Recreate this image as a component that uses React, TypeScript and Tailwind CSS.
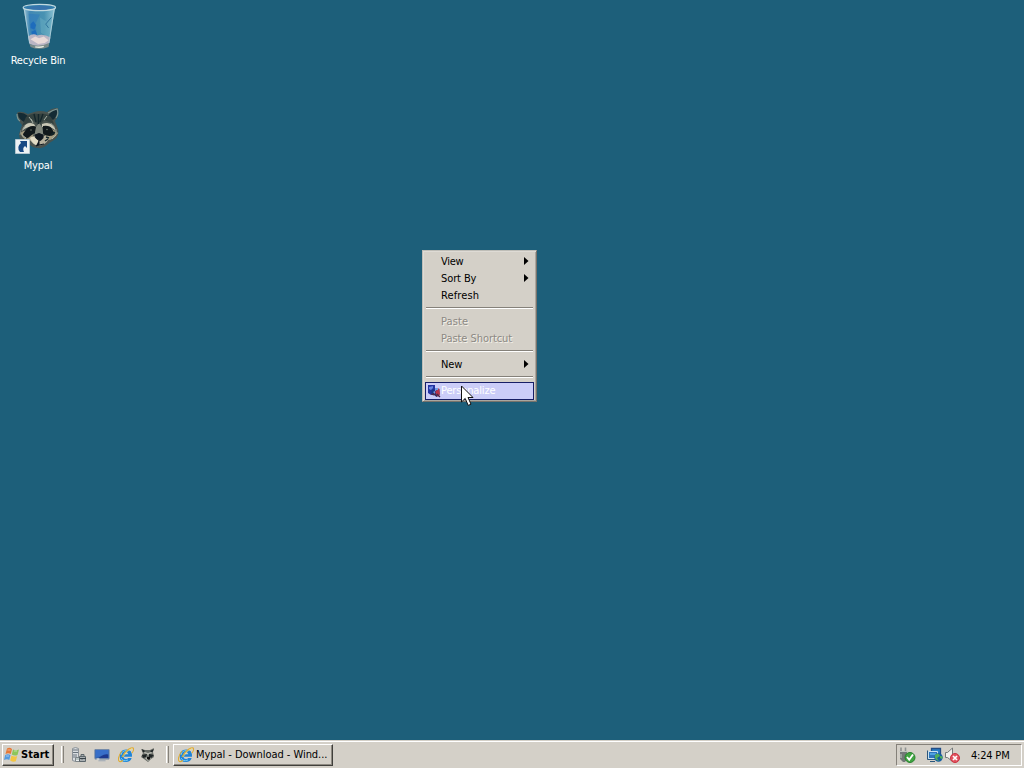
import React from "react";

function RecycleBin() {
  return (
    <svg className="ml-[3px]" width="38" height="46" viewBox="0 0 40 48">
      <defs>
        <linearGradient id="glass" x1="0" x2="1" y1="0" y2="0">
          <stop offset="0" stopColor="#9fc6d8" />
          <stop offset=".2" stopColor="#4389b4" />
          <stop offset=".65" stopColor="#4892b2" />
          <stop offset="1" stopColor="#8fc4d4" />
        </linearGradient>
      </defs>
      <path d="M2.500 4.500 L36 4.500 L29.500 43 Q19 49 9 43 Z" fill="url(#glass)" />
      <path d="M8 11 L11 38 L17 34 L15 22 L20 12 Z" fill="#2a78bd" opacity=".5" />
      <path d="M20 15 L28 20 L33 12 L29 36 L21 31 Z" fill="#66aabf" opacity=".6" />
      <path d="M10 22l3-3 3 4-2 5-4-2zM11 30l4-2 2 5-5 2z" fill="#1765bd" opacity=".75" />
      <path d="M32 15l-6 7 3 4" fill="none" stroke="#2d729b" />
      <path d="M7.500 35 Q13 31 17 34 Q24 32 31 36 L29 44 Q19 47 9 43Z" fill="#b9b5c4" />
      <path d="M10 38l5-3 4 2 5-2 5 4-4 3-7 1z" fill="#e8dad8" />
      <path d="M9 43 Q19 47 29.500 42 L29 46 Q19 50 10 46Z" fill="#7a8a88" />
      <path d="M15 46 Q20 47 24 45.500" stroke="#e7ebdf" strokeWidth="1.400" fill="none" />
      <ellipse cx="19.300" cy="4.500" rx="17" ry="3.300" fill="#327dac" stroke="#c0d9df" strokeWidth="1.300" />
      <path d="M3.500 6 L9 42M35 6 L29.500 42" stroke="#b9d5dd" opacity=".8" />
      <path d="M6 5 Q18 1 31 4 L27 7 Q15 8 6 5" fill="#3d6daf" opacity=".55" />
    </svg>
  );
}

function Raccoon() {
  return (
    <svg width="44" height="44" viewBox="0 0 44 44">
      <path d="M1 6 Q4 3 12 7 L18 5 Q25 3 31 5 Q35 1 42 1 Q44 8 39 14 L42 22 Q44 29 38 33 Q33 36 31 38 Q27 42 22 41 Q16 41 12 36 Q3 35 3 27 L6 18 Q1 13 1 6Z" fill="#49534f" />
      <path d="M2 6 Q7 5 12 9 L8 15 Q2 12 2 6M41 2 Q35 4 32 9 L37 13 Q42 9 41 2" fill="#142b34" />
      <path d="M1 7 Q1 12 4 14M32 6 Q37 3 41 2 Q43 7 40 11" stroke="#7b9492" fill="none" strokeWidth="1.200" />
      <path d="M10 10 Q17 5 22 7 Q29 5 35 10 L38 17 L28 13 L23 19 L17 13 L6 19Z" fill="#33413f" />
      <path d="M7 21 Q11 14 18 17 L20 20 Q12 18 6 24ZM26 17 Q33 14 38 19 L40 24 Q34 18 26 20" fill="#c9c8b7" />
      <path d="M4 26 Q10 21 18 26 L15 34 Q8 34 4 26ZM28 24 Q35 19 42 26 Q37 34 30 33Z" fill="#a39b80" />
      <path d="M9 24 Q14 17 21 20 L19 26 Q15 28 12 31 Q7 31 7 27ZM27 19 Q34 18 36 22 L39 27 Q34 31 27 27Z" fill="#11191c" />
      <circle cx="15" cy="23" r=".8" fill="#6a7167" />
      <circle cx="31" cy="22.500" r=".8" fill="#6a7167" />
      <path d="M20 20 L23 16 L26 20 L28 31 L18 31Z" fill="#81877d" />
      <path d="M13 31 Q22 26 33 30 Q32 36 26 38 Q17 40 13 31" fill="#b5b09c" />
      <path d="M14 31 Q18 28 20 32 L23 34 L20 38 Q16 36 14 31" fill="#e1dbc4" />
      <path d="M19 28 Q23 25 27 28 Q28 32 24 33.500 Q19 32 19 28M23 33v5l-3 1M23 38l5-1" fill="#101820" stroke="#101820" />
      <path d="M18 7l2 8M22.500 7v10M27 7l-3 8M30 30l3 1M29 34l3-2M35 28l4-3M10 32l4 2" stroke="#14262b" strokeWidth="1.400" />
      <path d="M13 10l3 4M31 9l-3 4M15 12l2 4M6 28l4 3M40 28l-4 4" stroke="#a7b0a6" />
      <path d="M9 19l-3 4M35 16l4 5M5 23l-1 5M40 22l1 5" stroke="#828e88" strokeWidth=".8" />
    </svg>
  );
}

function MiniRaccoon() {
  return (
    <svg width="14" height="14" viewBox="0 0 14 14">
      <path d="M0 1l4 1h5l4-2-1 4 1 5-3 2-3 3-4-3-3-2 2-4z" fill="#686c67" />
      <path d="M1 1l3 2-2 2zM13 1L9 3l2 2zM1 7l5-1-1 3-3 1zM8 6l5 1-3 3-2-1z" fill="#202627" />
      <path d="M2 5l4 1 1 2 1-2 4-1-2-1-3 1-3-1zM4 10l3-1 3 1-3 3z" fill="#b8bab2" />
      <path d="M6 9h3v2l-1 1-2-1z" fill="#111" />
    </svg>
  );
}

function Explorer() {
  return (
    <svg width="16" height="16" viewBox="0 0 16 16">
      <path d="M14 9.800H5.400Q5.700 12 8 12q1.600 0 2.200-1h3.500Q12.500 15 7.900 15 1.600 15 1.600 9q0-6.600 6.600-6.600 6.200 0 5.800 7.400zM5.500 7.300h4.800Q10 5.200 8 5.200q-2.200 0-2.500 2.100z" fill="#1f84d8" />
      <path d="M3 8q1-5 6-4.300M3 11q2 4 7 2" fill="none" stroke="#70cbf4" />
      <path d="M4 4Q0 9 .5 13q.5 3 4.500.5M4 10Q8 3 13 1q3-1 2.500 2-.3 1.500-1.700 3.200" fill="none" stroke="#e0ac32" strokeWidth="1.100" />
      <path d="M5 10Q9 3 14 1.500" fill="none" stroke="#ffe46c" strokeWidth=".7" />
    </svg>
  );
}

function WindowsFlag() {
  return (
    <svg width="17" height="16" viewBox="0 0 17 16">
      <path d="M4 1.500Q6.500 0 9 2L7.800 7Q5.300 5.300 2.500 7Z" fill="#e67937" />
      <path d="M10 2.500Q13 4 16 2.500L14.500 8Q11.500 9.300 8.800 7.500Z" fill="#8dc65a" />
      <path d="M2.200 8Q5 6.500 7.500 8L6.300 13Q4 11.300 1 13Z" fill="#559bdf" />
      <path d="M8.500 8.500Q11.200 10.300 14.200 9L12.800 14.300Q10 15.500 7.200 13.500Z" fill="#f3c542" />
      <path d="M4.500 3l3 0M11 4l3 0M3 9l3 0" stroke="#fff" opacity=".45" />
    </svg>
  );
}

function ServerIcon() {
  return (
    <svg width="16" height="16" viewBox="0 0 16 16">
      <path d="M1.500 1.500l3-1 3 1v12l-3 1-3-1z" fill="#d8dcdf" stroke="#8b9298" />
      <path d="M2 3h5M2 5.500h5M2 8h4M2 10h4" stroke="#68737c" />
      <path d="M4.500 10.500h5v4h-5z" fill="#e9edef" stroke="#7d8589" />
      <path d="M8.500 9.500h6v5h-6zM10 9V7.500h3V9" fill="#abb1b4" stroke="#5c666b" />
      <path d="M9 11.500h6M11 11v1.500" stroke="#384349" />
      <path d="M5 12h3" stroke="#879b98" />
    </svg>
  );
}

function DesktopIcon() {
  return (
    <svg width="16" height="14" viewBox="0 0 18 15">
      <path d="M1 1.500h16v10H1z" fill="#3568b4" stroke="#6880a2" />
      <path d="M2 2h14v5Q8 8 2 10z" fill="#386fc9" />
      <path d="M8 9q4-3 8-2v4H5z" fill="#1d398f" />
      <path d="M1 12.500h16M5 14h8" stroke="#94a1b0" />
      <path d="M3 12h3" stroke="#fff" />
    </svg>
  );
}

function TrayIcons() {
  return (
    <>
      <svg width="18" height="18" viewBox="0 0 18 18">
        <path d="M2 5h7v8l-2 3H5l-3-3z" fill="#737978" />
        <path d="M3 5V1.500M7.500 5V1.500" stroke="#8e9291" strokeWidth="1.600" />
        <path d="M1.500 5.500h8M3 8v4" stroke="#bfc5bf" />
        <circle cx="12" cy="11.500" r="5" fill="#40a541" stroke="#27812e" />
        <path d="M9 11l2.200 2.800L15 8.500" stroke="#fff" strokeWidth="1.800" fill="none" />
      </svg>
      <svg className="ml-[11px]" width="16" height="16" viewBox="0 0 16 16">
        <path d="M4.500 1.500h9v8h-9z" fill="#297fc7" stroke="#244e86" strokeWidth="1.300" />
        <path d="M1.500 4.500h9v7h-9z" fill="#2e75bc" stroke="#c9e1ef" />
        <path d="M.5 3.500v9h8M3 14.500h5" fill="none" stroke="#2b567c" />
        <path d="M3 6h6v2H3z" fill="#4fa3df" />
        <circle cx="11.500" cy="10.500" r="4.200" fill="#165ea1" />
        <path d="M8 8q4-3 5 1l-3 2 2 3q-5-1-4-6M13 9q4 0 2 3l-2-1z" fill="#4eae5c" />
      </svg>
      <svg width="18" height="18" viewBox="0 0 18 18">
        <path d="M2.500 6.500h2L9.500 2v13.500l-5-4h-2z" fill="#f2f1ed" stroke="#74787a" />
        <circle cx="12" cy="12" r="4.500" fill="#e35461" stroke="#ca3341" />
        <path d="M10 10l4 4m0-4l-4 4" stroke="#fff" strokeWidth="1.700" />
      </svg>
    </>
  );
}

function PersonalizeIcon() {
  return (
    <svg width="14" height="14" viewBox="0 0 14 14">
      <path d="M1 1h7v8l-4 2-3-2z" fill="#2434a1" />
      <path d="M2 3l4-1v2l-2 2-2-1z" fill="#6786df" />
      <path d="M4.500 6l3-1v2l5-2v6l-3 2-5-4z" fill="#183786" />
      <path d="M8 8l4-4 1 6-2 3z" fill="#b7354b" />
      <path d="M6 9l4 3M10 10l3 3M4 10l3 1" stroke="#4b284b" strokeWidth="1.300" />
      <path d="M6 8l2-1v3zM8 4h3v2H8z" fill="#749ce2" />
    </svg>
  );
}

type RowProps = { label: string; submenu?: boolean; disabled?: boolean; spacing: string };

function Row({ label, submenu, disabled, spacing }: RowProps) {
  return (
    <div className={`flex h-[17px] items-center justify-between pl-4 pr-[5px] leading-[17px] ${spacing} ${disabled ? "text-[#8c8984] [text-shadow:1px_1px_0_#f4f1e9]" : "text-black"}`}>
      <span>{label}</span>
      {submenu && <svg className="mb-[2px]" width="5" height="8" viewBox="0 0 5 8"><path d="M0 0L4.500 4 0 8Z" /></svg>}
    </div>
  );
}

function Separator() {
  return <div className="h-[9px] px-px pt-[3px]"><div className="h-px bg-[#85817a]" /><div className="h-px bg-white" /></div>;
}

function Menu() {
  return (
    <div className="absolute left-[422px] top-[250px] h-[152px] w-[115px] border border-[#bebdb7] border-b-[#77736c] border-r-[#77736c] bg-[#d4d0c8] p-[2px] text-[11px] shadow-[inset_1px_1px_#dedbd5,inset_-1px_-1px_#aaa69f]">
      <Row label="View" submenu spacing="tracking-[-0.25px]" />
      <Row label="Sort By" submenu spacing="tracking-[-0.1px]" />
      <Row label="Refresh" spacing="tracking-[0.13px]" />
      <Separator />
      <Row label="Paste" disabled spacing="tracking-[0.1px]" />
      <Row label="Paste Shortcut" disabled spacing="tracking-[-0.06px]" />
      <Separator />
      <Row label="New" submenu spacing="tracking-[-0.1px]" />
      <Separator />
      <div className="flex h-[18px] items-center border border-[#171e66] bg-[#cbcdf8] pl-px text-white">
        <PersonalizeIcon />
        <span className="tracking-[-0.15px]">Personalize</span>
      </div>
    </div>
  );
}

function Grip() {
  return <div className="h-[17px] w-[3px] border-l border-l-white border-r border-r-[#85817a]" />;
}

export default function App() {
  return (
    <div className="relative flex h-[768px] w-[1024px] flex-col overflow-hidden bg-[#1d5f7a] text-[11px] leading-[14px] [font-family:'DejaVu_Sans_Condensed','DejaVu_Sans',sans-serif]">
      <main className="relative flex-1">
        <div className="absolute left-0 top-0 flex w-[76px] flex-col items-center pt-[3px] text-white">
          <RecycleBin />
          <span className="mt-[5px] whitespace-nowrap tracking-[-0.22px]">Recycle Bin</span>
        </div>
        <div className="absolute left-0 top-[107px] flex w-[76px] flex-col items-center text-white">
          <Raccoon />
          <span className="mt-[8px] tracking-[-0.15px]">Mypal</span>
          <svg className="absolute left-[15px] top-[32px]" width="15" height="15" viewBox="0 0 15 15">
            <path d="M.5.5h14v14H.5z" fill="#edf2f4" stroke="#b2c6d0" />
            <path d="M5 2h7v7l-2-2Q7 9 9 13H5Q1 8 6 4Z" fill="#174985" />
          </svg>
        </div>
        <Menu />
        <svg className="absolute left-[461px] top-[385px]" width="13" height="21" viewBox="0 0 13 21">
          <path d="M.5 1v16l3.700-3.600 3 7 2.800-1.200-3-6.700H12z" fill="#fff" stroke="#111" />
        </svg>
      </main>

      <footer className="flex h-7 items-center border-t border-t-[#d4d0c8] bg-[#d4d0c8] pl-[2px] pr-[2px] shadow-[inset_0_1px_white]">
        <button className="flex h-[22px] w-[52px] items-center border border-white border-b-[#403f3b] border-r-[#403f3b] text-[11px] font-bold shadow-[inset_-1px_-1px_#8d8981]">
          <WindowsFlag />
          <span className="ml-px pt-px tracking-[0.05px]">Start</span>
        </button>
        <div className="ml-[7px]"><Grip /></div>
        <div className="ml-[7px] flex w-[84px] items-center justify-between">
          <ServerIcon /><DesktopIcon /><Explorer /><MiniRaccoon />
        </div>
        <div className="ml-[11px]"><Grip /></div>
        <button className="ml-[4px] flex h-[22px] w-[160px] items-center border border-white border-b-[#403f3b] border-r-[#403f3b] pl-[4px] shadow-[inset_-1px_-1px_#8d8981]">
          <Explorer />
          <span className="ml-[2px] whitespace-nowrap pt-px tracking-[-0.05px]">Mypal - Download - Wind...</span>
        </button>
        <div className="ml-auto flex h-[22px] w-[126px] items-center border border-[#85817a] border-b-white border-r-white pl-px">
          <TrayIcons />
          <span className="ml-[10px] whitespace-nowrap pt-[2px] tracking-[-0.2px]">4:24 PM</span>
        </div>
      </footer>
    </div>
  );
}
